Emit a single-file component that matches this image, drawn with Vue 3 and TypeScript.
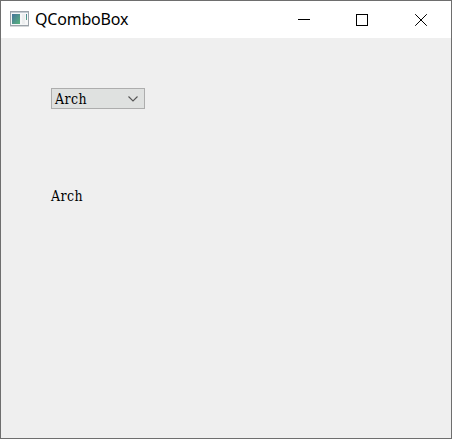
<script setup lang="ts">
import { ref } from 'vue'

const title = ref('QComboBox')
const selected = ref('Arch')
</script>

<template>
  <div class="window">
    <header class="titlebar">
      <svg class="app-icon" width="19" height="16" viewBox="0 0 19 16">
        <defs>
          <linearGradient id="screen" x1="0" y1="0" x2="1" y2="1">
            <stop offset="0" stop-color="#45739b" />
            <stop offset="1" stop-color="#58b47c" />
          </linearGradient>
        </defs>
        <rect x="0.5" y="0.5" width="18" height="14" fill="#f6f7f8" stroke="#9ba3aa" />
        <rect x="1" y="1" width="17" height="1" fill="#c3cbd2" />
        <rect x="2" y="3" width="8" height="10" fill="url(#screen)" />
        <rect x="12" y="3" width="3" height="10" fill="#eceeef" />
        <rect x="16" y="3" width="1" height="6" fill="url(#screen)" />
        <rect x="0" y="15" width="19" height="1" fill="#d5d8da" />
      </svg>
      <span class="title">{{ title }}</span>
      <div class="controls">
        <button class="control" aria-label="Minimize">
          <svg width="12" height="12" viewBox="0 0 12 12" shape-rendering="crispEdges">
            <path d="M0 5.5H12" />
          </svg>
        </button>
        <button class="control" aria-label="Maximize">
          <svg width="12" height="12" viewBox="0 0 12 12" shape-rendering="crispEdges">
            <rect x="0.5" y="0.5" width="11" height="11" />
          </svg>
        </button>
        <button class="control" aria-label="Close">
          <svg width="12" height="12" viewBox="0 0 12 12">
            <path d="M0.2 0.2L11.8 11.8M11.8 0.2L0.2 11.8" />
          </svg>
        </button>
      </div>
    </header>
    <main class="content">
      <button class="combo">
        <span class="value">{{ selected }}</span>
        <svg width="10" height="6" viewBox="0 0 10 6">
          <path d="M0.5 0.5L5 5L9.5 0.5" />
        </svg>
      </button>
      <div class="label value">{{ selected }}</div>
    </main>
  </div>
</template>

<style>
body {
  margin: 0;
}
</style>

<style scoped>
.window {
  box-sizing: border-box;
  width: 452px;
  height: 439px;
  border: 1px solid #6e6e6e;
  background: #efefef;
  overflow: hidden;
}
.titlebar {
  display: flex;
  align-items: center;
  height: 37px;
  padding-left: 9px;
  background: #fff;
}
.app-icon {
  flex: none;
  margin-top: -1px;
}
.title {
  margin-left: 6px;
  margin-top: -1px;
  font: 16px/22px "Noto Sans", "Open Sans", sans-serif;
  letter-spacing: -0.2px;
  color: #000;
}
.controls {
  display: flex;
  height: 100%;
  margin-left: auto;
  margin-right: 1px;
}
.control {
  display: flex;
  align-items: center;
  justify-content: center;
  width: 58.5px;
  padding: 0;
  border: 0;
  background: none;
}
.control svg {
  fill: none;
  stroke: #000;
  stroke-width: 1;
}
.content {
  padding: 50px;
}
.combo {
  box-sizing: border-box;
  display: flex;
  align-items: center;
  justify-content: space-between;
  width: 94px;
  height: 21px;
  padding: 0 6px 0 3px;
  border: 1px solid #adadad;
  background: #dfe1e0;
}
.combo svg {
  fill: none;
  stroke: #555;
  stroke-width: 1.1;
}
.value {
  font: 14px/18px "DejaVu Serif Condensed", "DejaVu Serif", serif;
  font-stretch: condensed;
  letter-spacing: 0.4px;
  color: #000;
}
.label {
  margin-top: 78px;
}
</style>
